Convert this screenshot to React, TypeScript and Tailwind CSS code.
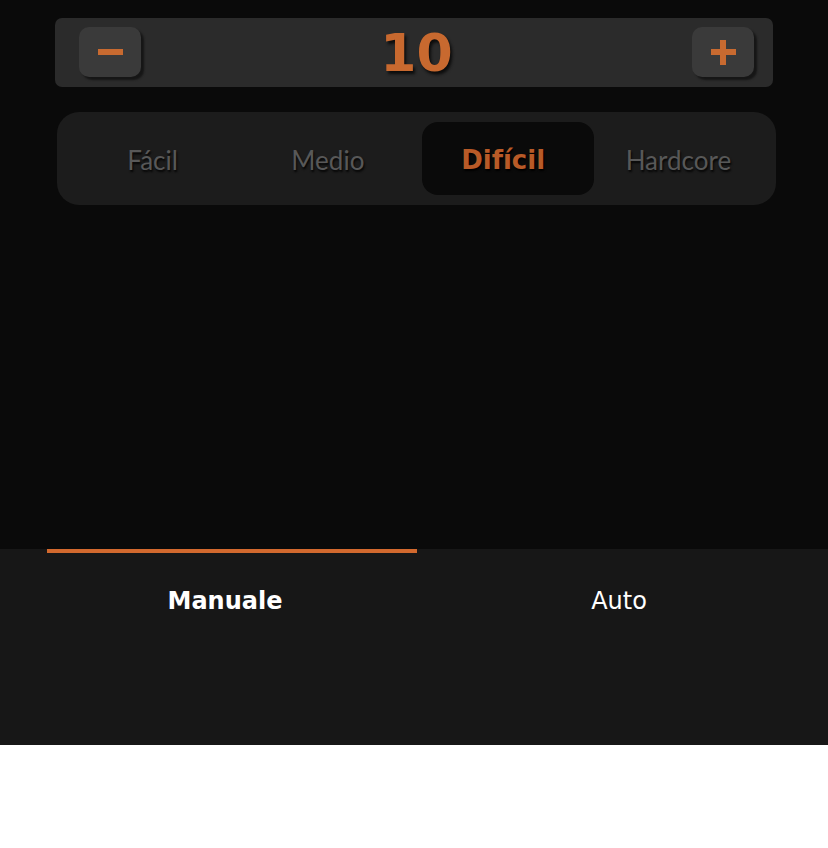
import { useState } from "react";

const LEVELS = ["Fácil", "Medio", "Difícil", "Hardcore"];

function StepButton({ kind, onClick }: { kind: "minus" | "plus"; onClick: () => void }) {
  return (
    <button
      onClick={onClick}
      className="relative w-[62px] h-[50px] rounded-[10px] bg-[#3a3a3a] shadow-[3px_3px_2px_#161616] flex items-center justify-center"
    >
      <span className="absolute w-[25px] h-[6px] bg-[#c86a30]" />
      {kind === "plus" && <span className="absolute w-[6px] h-[25px] bg-[#c86a30]" />}
    </button>
  );
}

export default function App() {
  const [count, setCount] = useState(10);
  const [level, setLevel] = useState(2);
  const [tab, setTab] = useState(0);

  return (
    <div className="w-full">
      <div className="h-[549px] bg-[#0a0a0a] pt-[18px]">
        <div className="ml-[55px] w-[718px] h-[69px] rounded-[7px] bg-[#2b2b2b] flex items-center pl-[24px] pr-[19px] pb-[1px]">
          <StepButton kind="minus" onClick={() => setCount((c) => Math.max(0, c - 1))} />
          <div
            className="flex-1 pt-[2px] text-center text-[52px] leading-none font-bold text-[#c8692f] [text-shadow:2px_3px_3px_#0c0c0c]"
            style={{ fontFamily: '"DejaVu Sans", sans-serif' }}
          >
            {count}
          </div>
          <StepButton kind="plus" onClick={() => setCount((c) => c + 1)} />
        </div>

        <div className="mt-[25px] ml-[57px] w-[719px] h-[93px] rounded-[22px] bg-[#1c1c1c] grid grid-cols-4 pl-[8px] pr-[10px] py-[10px]">
          {LEVELS.map((l, i) =>
            i === level ? (
              <button
                key={l}
                onClick={() => setLevel(i)}
                className="ml-[6px] -mr-[3px] pr-[9px] pt-[3px] rounded-[16px] bg-[#0a0a0a] flex items-center justify-center text-[26px] font-bold text-[#b85a27] [text-shadow:1px_2px_2px_#000]"
                style={{ fontFamily: '"DejaVu Sans", sans-serif' }}
              >
                {l}
              </button>
            ) : (
              <button
                key={l}
                onClick={() => setLevel(i)}
                className="pt-[3px] flex items-center justify-center text-[26px] text-[#585858] [text-shadow:1px_2px_2px_#050505]"
                style={{ fontFamily: "Lato, sans-serif" }}
              >
                {l}
              </button>
            )
          )}
        </div>
      </div>

      <div className="h-[196px] bg-[#171717]">
        <div className="flex">
          <div className={`ml-[47px] w-[370px] h-[4px] ${tab === 0 ? "bg-[#d2692e]" : "bg-transparent"}`} />
        </div>
        <div
          className="mt-[34px] flex pl-[28px] pr-[12px] text-[24px] leading-7 text-white"
          style={{ fontFamily: '"DejaVu Sans", sans-serif' }}
        >
          <button onClick={() => setTab(0)} className={`flex-1 text-center ${tab === 0 ? "font-bold" : ""}`}>
            Manuale
          </button>
          <button onClick={() => setTab(1)} className={`flex-1 text-center ${tab === 1 ? "font-bold" : ""}`}>
            Auto
          </button>
        </div>
      </div>
    </div>
  );
}
